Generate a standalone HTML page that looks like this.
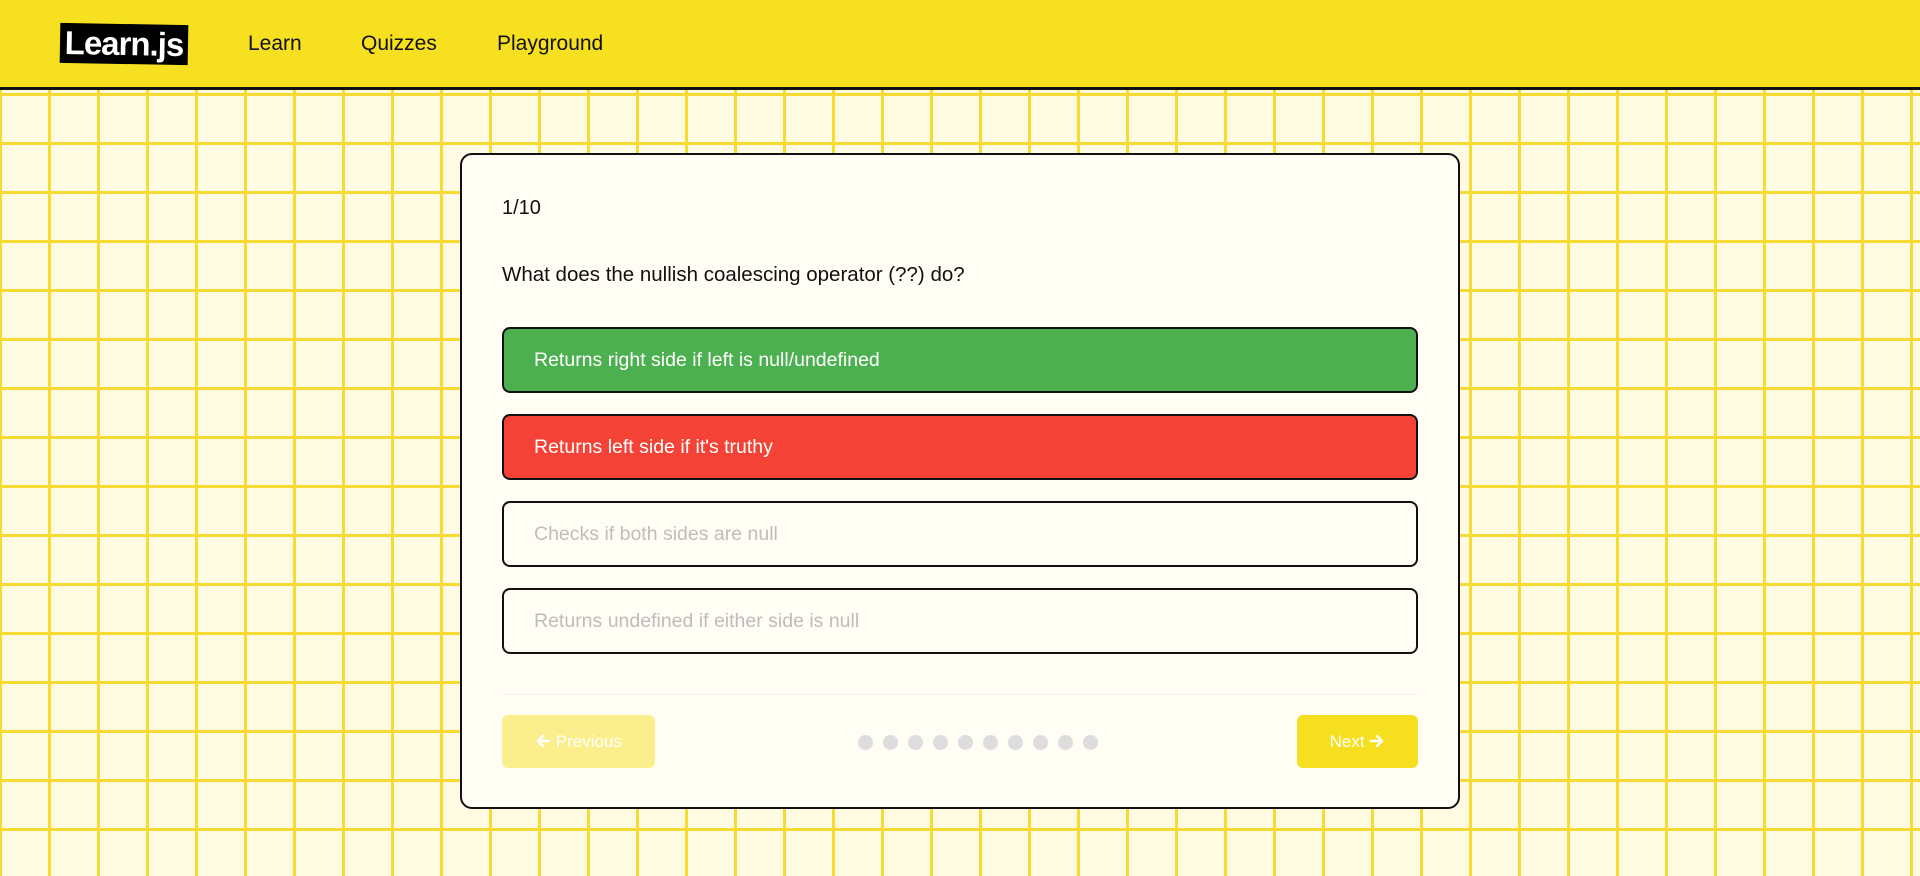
<!DOCTYPE html>
<html><head><meta charset="utf-8"><style>
*{box-sizing:border-box;margin:0;padding:0}
html,body{width:1920px;height:876px;overflow:hidden}
body{font-family:"Liberation Sans",sans-serif;background-color:#fffbe3;
background-image:linear-gradient(to right,#f6dc32 0,#f6dc32 3px,transparent 3px),linear-gradient(to bottom,#f6dc32 0,#f6dc32 3px,transparent 3px);
background-size:49px 49px;background-position:-1px 44px;position:relative}
.hdr{position:absolute;left:0;top:0;width:1920px;height:90px;background:#f7e01f;border-bottom:3px solid #111}
.logo{position:absolute;left:60px;top:24px;width:128px;height:40px;background:#000;transform:rotate(1deg);color:#fff;font-weight:bold;font-size:33px;line-height:40px;text-align:center;letter-spacing:-1px}
.nav{position:absolute;top:32px;font-size:21px;color:#111}
.card{position:absolute;left:460px;top:153px;width:1000px;height:656px;background:#fffdf4;border:2px solid #111;border-radius:12px}
.cnt{position:absolute;left:40px;top:42px;font-size:20px;color:#111}
.q{position:absolute;left:40px;top:108px;font-size:20.5px;color:#111}
.opt{position:absolute;left:40px;width:916px;height:66px;border:2px solid #111;border-radius:8px;padding-left:30px;font-size:19.5px;line-height:63px;background:#fffdf4;color:#bdbdbd}
.div{position:absolute;left:40px;top:539px;width:916px;height:1px;background:#eee}
.btn{position:absolute;top:560px;height:53px;border-radius:6px;color:#fff;font-size:17px;line-height:53px;text-align:center}
.btn svg{vertical-align:-2px}
.dot{position:absolute;top:580px;width:15px;height:15px;border-radius:50%;background:#ddd}
</style></head><body>
<div class="hdr">
<div class="logo">Learn.js</div>
<div class="nav" style="left:248px">Learn</div>
<div class="nav" style="left:361px">Quizzes</div>
<div class="nav" style="left:497px">Playground</div>
</div>
<div class="card">
<div class="cnt">1/10</div>
<div class="q">What does the nullish coalescing operator (??) do?</div>
<div class="opt" style="top:172px;background:#4caf50;color:#fff">Returns right side if left is null/undefined</div>
<div class="opt" style="top:259px;background:#f44336;color:#fff">Returns left side if it's truthy</div>
<div class="opt" style="top:346px">Checks if both sides are null</div>
<div class="opt" style="top:433px">Returns undefined if either side is null</div>
<div class="div"></div>
<div class="btn" style="left:40px;width:153px;background:#fbee8c"><svg width="16" height="16" viewBox="0 0 16 16"><path d="M14 8H3M8 3L3 8l5 5" stroke="#fff" stroke-width="2.5" fill="none" stroke-linecap="round" stroke-linejoin="round"/></svg> Previous</div>
<div class="dot" style="left:396px"></div><div class="dot" style="left:421px"></div><div class="dot" style="left:446px"></div><div class="dot" style="left:471px"></div><div class="dot" style="left:496px"></div><div class="dot" style="left:521px"></div><div class="dot" style="left:546px"></div><div class="dot" style="left:571px"></div><div class="dot" style="left:596px"></div><div class="dot" style="left:621px"></div>
<div class="btn" style="left:835px;width:121px;background:#f6df1f">Next <svg width="16" height="16" viewBox="0 0 16 16"><path d="M2 8h11M8 3l5 5-5 5" stroke="#fff" stroke-width="2.5" fill="none" stroke-linecap="round" stroke-linejoin="round"/></svg></div>
</div>
</body></html>
